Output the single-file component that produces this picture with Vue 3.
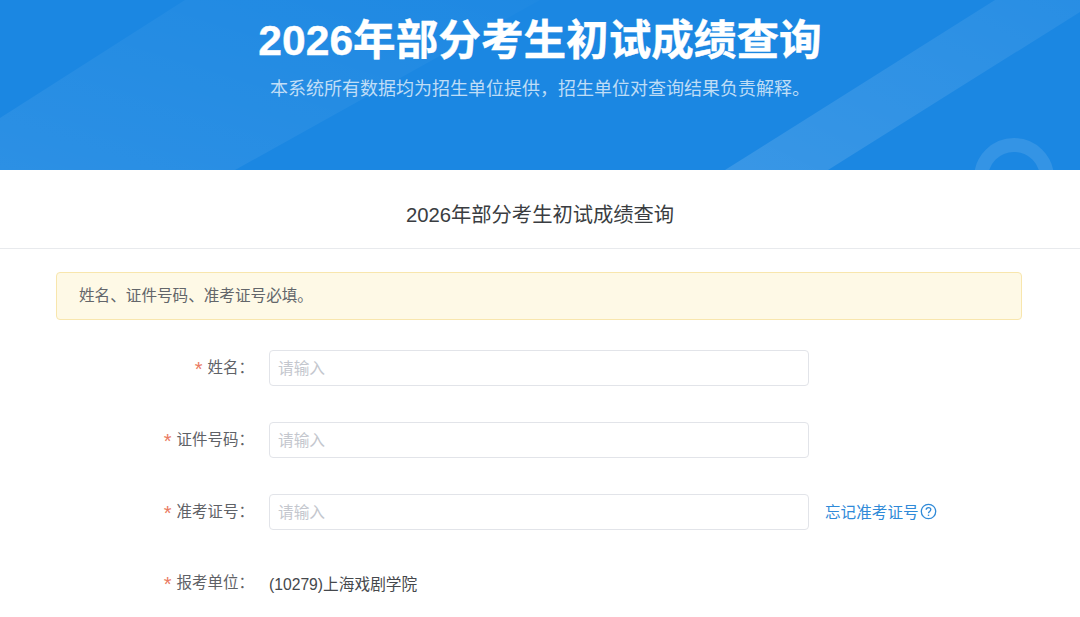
<template>
  <div class="page">
    <header class="banner">
      <svg class="banner-bg" viewBox="0 0 1080 170" preserveAspectRatio="none" aria-hidden="true">
        <defs>
          <linearGradient id="bandLeft" x1="0" y1="1" x2="1" y2="0">
            <stop offset="0" stop-color="#fff" stop-opacity="0.075" />
            <stop offset="1" stop-color="#fff" stop-opacity="0.015" />
          </linearGradient>
          <linearGradient id="bandRight" x1="0" y1="1" x2="1" y2="0">
            <stop offset="0" stop-color="#fff" stop-opacity="0.13" />
            <stop offset="1" stop-color="#fff" stop-opacity="0.06" />
          </linearGradient>
        </defs>
        <polygon points="0,118 185,0 540,0 235,170 0,170" fill="url(#bandLeft)" />
        <polygon points="725,170 995,0 1080,0 1080,12 828,170" fill="url(#bandRight)" />
        <circle cx="1014" cy="178" r="33" fill="none" stroke="#fff" stroke-width="14" opacity="0.11" />
      </svg>
      <h1 class="banner-title">{{ title }}</h1>
      <p class="banner-sub">本系统所有数据均为招生单位提供，招生单位对查询结果负责解释。</p>
    </header>

    <h2 class="section-title">{{ title }}</h2>

    <main class="content">
      <div class="notice">姓名、证件号码、准考证号必填。</div>

      <form class="form" @submit.prevent>
        <div v-for="field in fields" :key="field.label" class="row">
          <label class="label"><span class="star">*</span>{{ field.label }}：</label>
          <input class="input" type="text" placeholder="请输入" />
          <a v-if="field.help" class="help" href="#">
            忘记准考证号
            <svg class="help-icon" width="17" height="17" viewBox="0 0 17 17" fill="none" stroke="currentColor" aria-hidden="true">
              <circle cx="8.5" cy="8.5" r="7.2" stroke-width="1.3" />
              <path d="M6.2 6.8c0-1.4 1-2.2 2.3-2.2s2.3.8 2.3 2c0 1-.6 1.5-1.3 2-.7.4-1 .8-1 1.7" stroke-width="1.3" />
              <path d="M8.5 11.6v1.3" stroke-width="1.4" />
            </svg>
          </a>
        </div>
        <div class="row row-static">
          <label class="label"><span class="star">*</span>报考单位：</label>
          <span class="value">(10279)上海戏剧学院</span>
        </div>
      </form>
    </main>
  </div>
</template>

<script setup>
const title = '2026年部分考生初试成绩查询'

const fields = [
  { label: '姓名' },
  { label: '证件号码' },
  { label: '准考证号', help: true },
]
</script>

<style>
html,
body {
  margin: 0;
  height: 100%;
  overflow: hidden;
  background: #fff;
}
</style>

<style scoped>
.page {
  font-family: "Liberation Sans", "Noto Sans CJK SC", sans-serif;
  color: #4a4d52;
}

.banner {
  position: relative;
  height: 170px;
  box-sizing: border-box;
  padding-top: 12px;
  overflow: hidden;
  text-align: center;
  background: #1b87e2;
}

.banner-bg {
  position: absolute;
  inset: 0;
  width: 100%;
  height: 100%;
}

.banner-title {
  position: relative;
  margin: 0;
  font-size: 42.6px;
  line-height: 56px;
  font-weight: 700;
  color: #fff;
  -webkit-text-stroke: 0.4px #fff;
}

.banner-sub {
  position: relative;
  margin: 7px 0 0;
  font-size: 18px;
  line-height: 28px;
  color: rgba(255, 255, 255, 0.72);
}

.section-title {
  margin: 0;
  height: 78px;
  border-bottom: 1px solid #e8eaed;
  font-size: 20.3px;
  font-weight: 400;
  line-height: 90px;
  text-align: center;
  color: #3a3d41;
}

.content {
  padding: 23px 58px 0 56px;
}

.notice {
  height: 48px;
  box-sizing: border-box;
  padding-left: 22px;
  border: 1px solid #f8e6ad;
  border-radius: 4px;
  background: #fef9e6;
  font-size: 15.6px;
  line-height: 46px;
  color: #63666a;
}

.form {
  display: flex;
  flex-direction: column;
  gap: 36px;
  margin-top: 30px;
}

.row {
  display: flex;
  align-items: center;
  height: 36px;
}

.row-static {
  margin-top: 7px;
  height: 20px;
}

.label {
  flex: none;
  width: 198px;
  margin-right: 15px;
  margin-top: -2px;
  text-align: right;
  font-size: 15.5px;
  color: #5f6267;
}

.star {
  margin-right: 5px;
  color: #ea7a62;
  font-size: 20px;
  line-height: 1;
  vertical-align: -3px;
}

.input {
  flex: none;
  width: 540px;
  height: 36px;
  box-sizing: border-box;
  padding: 2px 8px 0;
  border: 1px solid #e2e4e9;
  border-radius: 4px;
  outline: none;
  font: inherit;
  font-size: 15.7px;
}

.input::placeholder {
  color: #c4c7ce;
}

.help {
  display: flex;
  align-items: center;
  gap: 1px;
  margin-top: -2px;
  margin-left: 16px;
  font-size: 15.6px;
  color: #2f8ad8;
  text-decoration: none;
}

.value {
  font-size: 15.7px;
  color: #45484c;
}
</style>
